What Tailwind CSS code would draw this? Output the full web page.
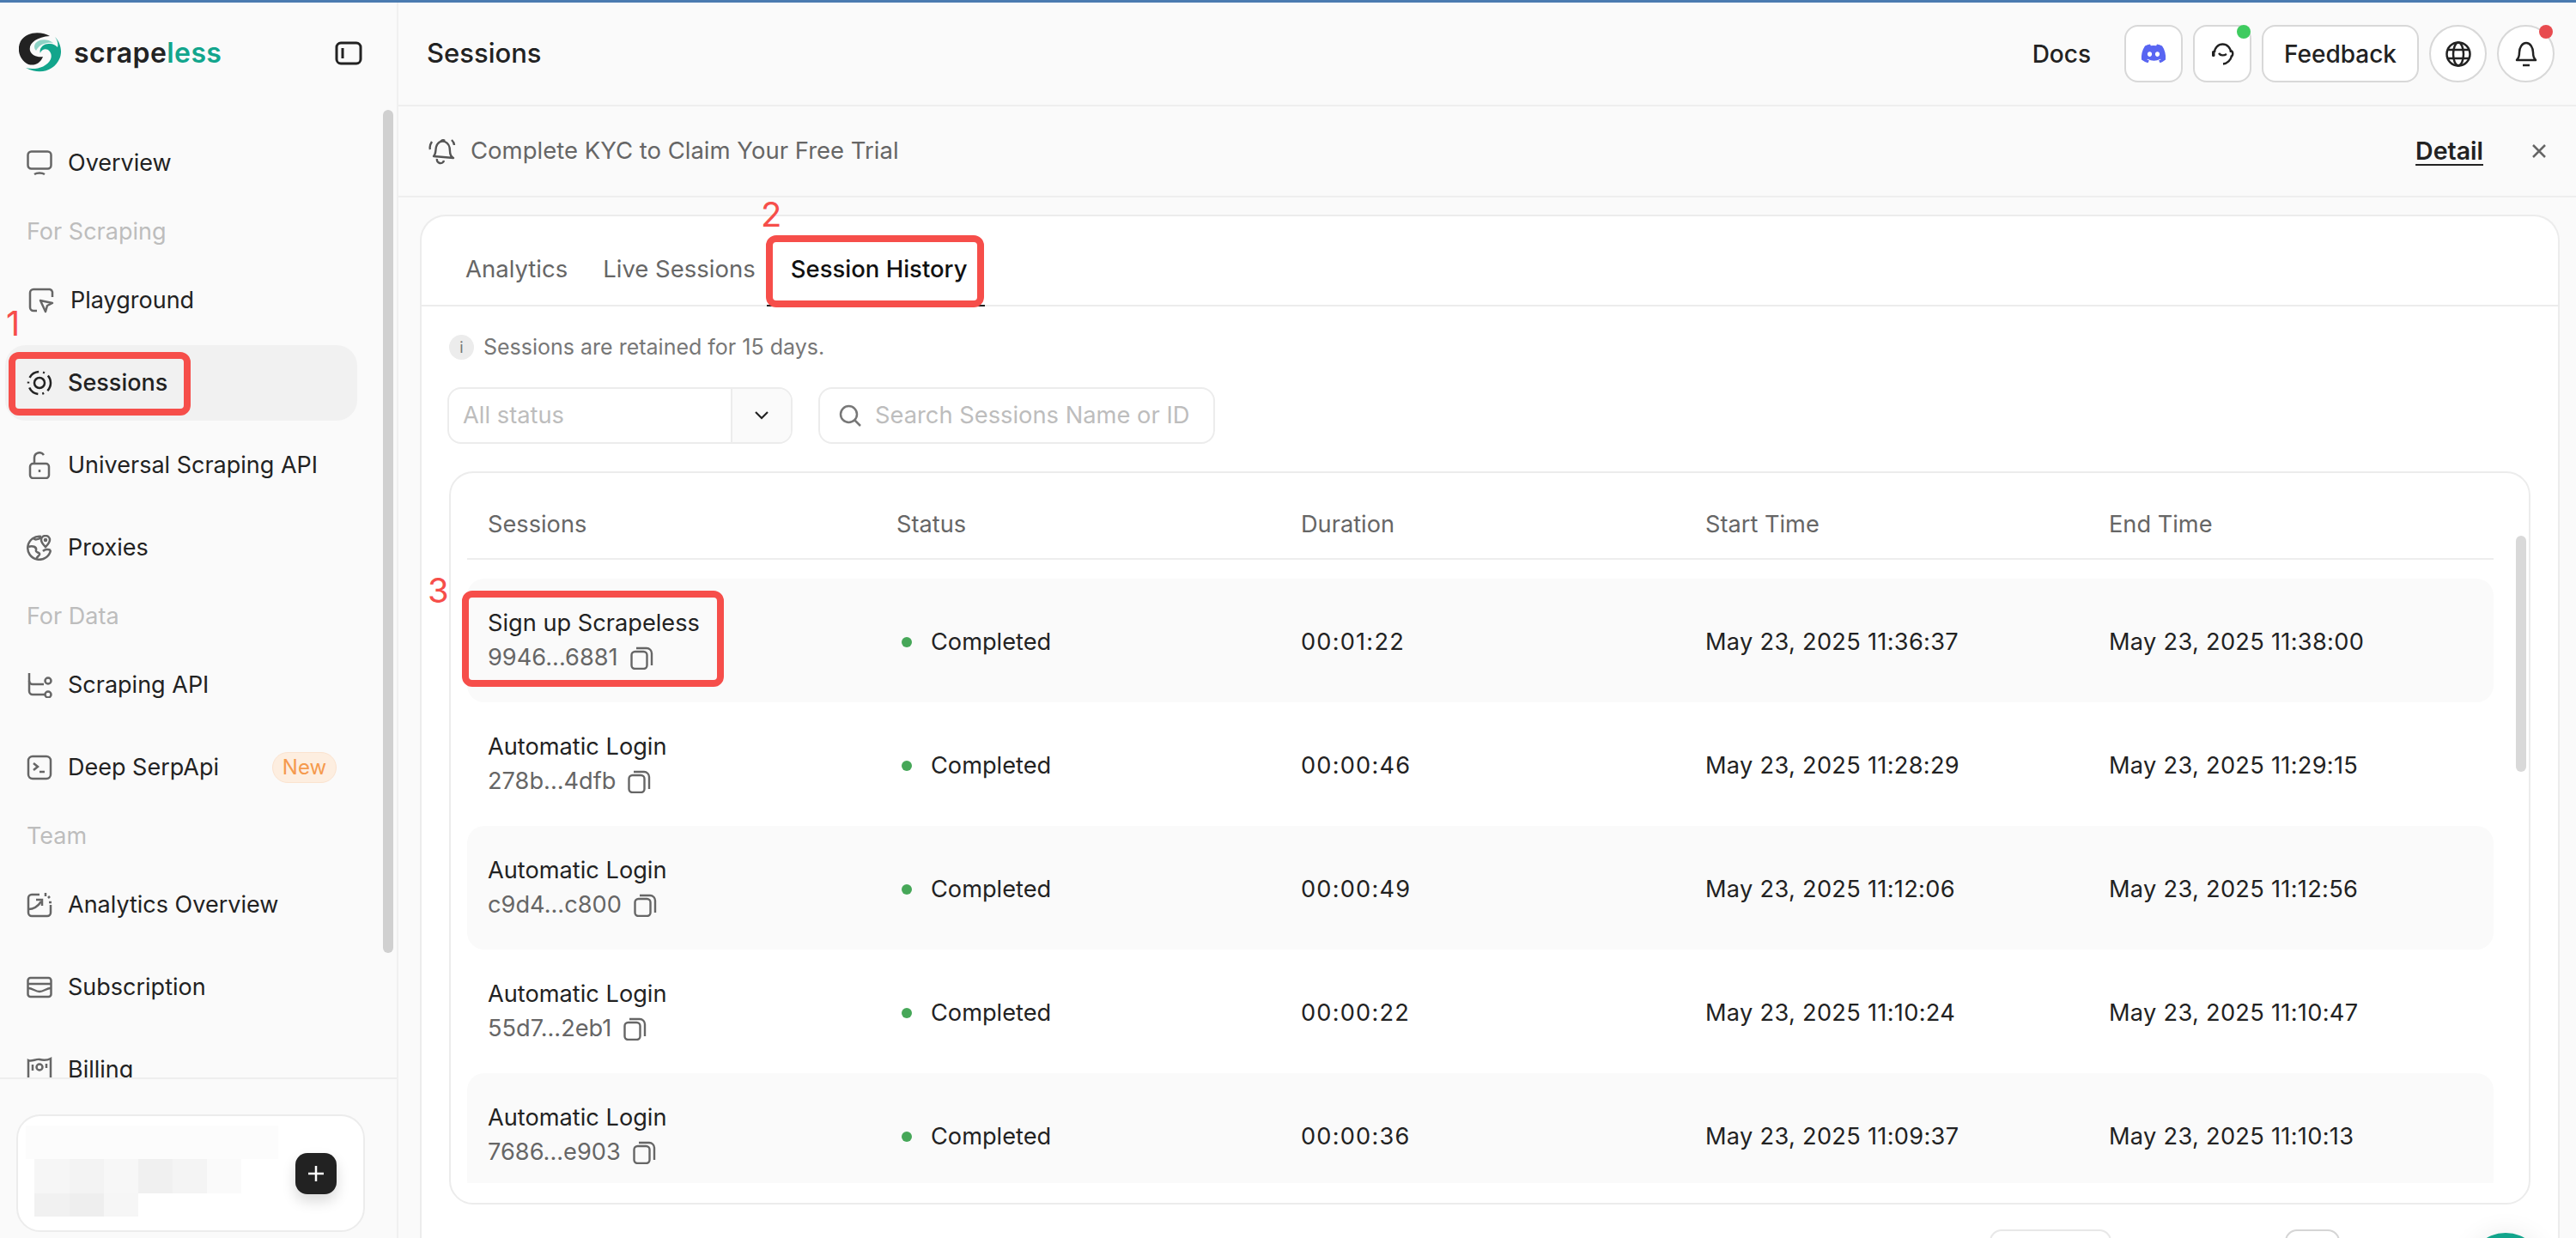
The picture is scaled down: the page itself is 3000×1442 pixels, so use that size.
<!DOCTYPE html>
<html lang="en">
<head>
<meta charset="utf-8">
<title>Sessions</title>
<script src="https://cdn.jsdelivr.net/npm/@tailwindcss/browser@4"></script>
</head>
<body class="[font-family:Inter,sans-serif] text-[#222222] bg-[#fafafa]">
<div class="relative w-[3000px] h-[1442px] overflow-hidden flex flex-col">
  <div class="h-[3px] bg-[#4a7bb0] shrink-0"></div>
  <div class="flex flex-1 min-h-0">
    <!-- Sidebar -->
    <aside class="relative w-[464px] shrink-0 border-r-2 border-[#f0f0f0] flex flex-col">
      <div class="h-[119px] shrink-0 flex items-start pt-[34px] pl-[22px]">
        <svg class="w-[50px] h-[49px] shrink-0" viewBox="0 0 50 49">
          <path d="M36 5C28 0 10-2 2 11C-3 21 1 33 11 38C18 40 25 37 28 29C22 30 15 28 13 22C11 14 20 6 36 5Z" fill="#222222"/>
          <path d="M18 17C19 10 30 6 40 13C33 12 24 14 20 22C18 20 18 18 18 17Z" fill="#8ed3c6"/>
          <path d="M42 6C49 13 51 24 47 32C42 43 27 52 8 42C18 45 32 42 37 32C40 24 33 18 28 21C26 22 25 24 25 25C23 20 28 13 36 14C40 14 43 16 45 18C46 14 45 10 42 6Z" fill="#12a58c"/>
        </svg>
        <div class="ml-[14px] mt-[5px] font-semibold text-[32px] leading-[40px] tracking-[0.4px]">scrape<span class="text-[#12a58c]">less</span></div>
        <svg class="absolute left-[390px] top-[45px] w-[32px] h-[28px]" viewBox="0 0 32 28" fill="none" stroke="#222222" stroke-width="3"><rect x="2" y="2" width="28" height="24" rx="5"/><path d="M9 8v12"/></svg>
      </div>
      <nav class="flex-1 min-h-0 overflow-hidden pt-[24px] pl-[6px] pr-[46px] flex flex-col gap-[8px] text-[27px]">
        <a class="h-[88px] shrink-0 flex items-center gap-[18px] pl-[25px]">
          <svg class="w-[30px] h-[30px] shrink-0" viewBox="0 0 30 30" fill="none" stroke="#666666" stroke-width="2.5"><rect x="1.500" y="1.500" width="27" height="20" rx="4"/><path d="M9 28c3-2 9-2 12 0"/></svg>
          Overview</a>
        <div class="h-[56px] shrink-0 flex items-center pl-[25px] text-[#bdbdbd]">For Scraping</div>
        <a class="h-[88px] shrink-0 flex items-center gap-[19px] pl-[27px]">
          <svg class="w-[30px] h-[30px] shrink-0" viewBox="0 0 30 30" fill="none" stroke="#666666" stroke-width="2.5"><path d="M10 27H6a4 4 0 0 1-4-4V6a4 4 0 0 1 4-4h19a4 4 0 0 1 3 3v6"/><path d="M14 15l14 3-6 3-2 7Z" stroke-linejoin="round"/></svg>
          Playground</a>
        <a class="h-[88px] shrink-0 flex items-center gap-[18px] pl-[25px] bg-[#f1f1f1] rounded-[24px] font-medium">
          <svg class="w-[30px] h-[30px] shrink-0" viewBox="0 0 30 30" fill="none" stroke="#222222" stroke-width="2.5"><circle cx="15" cy="15" r="6"/><circle cx="15" cy="15" r="13" stroke-dasharray="13 5 2 5" stroke-dashoffset="3"/></svg>
          Sessions</a>
        <a class="h-[88px] shrink-0 flex items-center gap-[18px] pl-[25px]">
          <svg class="w-[30px] h-[32px] shrink-0" viewBox="0 0 30 32" fill="none" stroke="#666666" stroke-width="2.5"><rect x="4" y="14" width="22" height="17" rx="3.500"/><path d="M9 14V7a6 6 0 0 1 11-3"/><path d="M15 21v3"/></svg>
          Universal Scraping API</a>
        <a class="h-[88px] shrink-0 flex items-center gap-[18px] pl-[25px]">
          <svg class="w-[30px] h-[30px] shrink-0" viewBox="0 0 30 30" fill="none" stroke="#666666" stroke-width="2.5"><path d="M28 18A13.500 13.500 0 1 1 17 2"/><path d="M2 14c5-2 10 0 9 4-1 3 5 2 4 5-1 2-4 3-4 6"/><path d="M17 3c-4 3-8 3-9 1"/><path d="M22 14c-3-3-5-5-5-8a5 5 0 0 1 10 0c0 3-2 5-5 8Z"/><path d="M28 18c-3-2-7-1-9 1"/><circle cx="22" cy="6" r="1" fill="#666666"/></svg>
          Proxies</a>
        <div class="h-[56px] shrink-0 flex items-center pl-[25px] text-[#bdbdbd]">For Data</div>
        <a class="h-[88px] shrink-0 flex items-center gap-[18px] pl-[25px]">
          <svg class="w-[30px] h-[30px] shrink-0" viewBox="0 0 30 30" fill="none" stroke="#666666" stroke-width="2.5"><path d="M3 1v21a4 4 0 0 0 4 4h14"/><path d="M3 10a4 4 0 0 0 4 4h13"/><circle cx="25" cy="10" r="3.500"/><circle cx="25" cy="26" r="3.500"/></svg>
          Scraping API</a>
        <a class="relative h-[88px] shrink-0 flex items-center gap-[18px] pl-[25px]">
          <svg class="w-[30px] h-[30px] shrink-0" viewBox="0 0 30 30" fill="none" stroke="#666666" stroke-width="2.5"><rect x="2" y="2" width="26" height="26" rx="5"/><path d="M8 10l5 4-5 4M15 20h6"/></svg>
          Deep SerpApi
          <span class="absolute left-[311px] top-[26px] w-[75px] h-[36px] rounded-full bg-[#fdeee0] border border-[#fbe3cf] text-[#f59a4d] text-[24px] flex items-center justify-center">New</span></a>
        <div class="h-[56px] shrink-0 flex items-center pl-[25px] text-[#bdbdbd]">Team</div>
        <a class="h-[88px] shrink-0 flex items-center gap-[18px] pl-[25px]">
          <svg class="w-[30px] h-[30px] shrink-0" viewBox="0 0 30 30" fill="none" stroke="#666666" stroke-width="2.5"><path d="M15 3H6a4 4 0 0 0-4 4v17a4 4 0 0 0 4 4h18a4 4 0 0 0 4-4v-9"/><path d="M2 20c6 0 11-3 15-9"/><path d="M11 9h7v7"/><path d="M22 1v4M27 5l-2 2M29 12h-3"/></svg>
          Analytics Overview</a>
        <a class="h-[88px] shrink-0 flex items-center gap-[18px] pl-[25px]">
          <svg class="w-[30px] h-[26px] shrink-0" viewBox="0 0 30 26" fill="none" stroke="#666666" stroke-width="2.5"><rect x="1.500" y="2" width="27" height="22" rx="3"/><path d="M2 9h26M2 14c5 0 8 4 13 4s8-4 13-4"/></svg>
          Subscription</a>
        <a class="h-[88px] shrink-0 flex items-center gap-[18px] pl-[25px]">
          <svg class="w-[30px] h-[30px] shrink-0" viewBox="0 0 30 30" fill="none" stroke="#666666" stroke-width="2.5"><path d="M2 26V4c4 2 9-2 13-1s9 1 13-1v24"/><circle cx="15" cy="12" r="3.500"/><path d="M7 9v7M23 8v5"/></svg>
          Billing</a>
      </nav>
      <div class="h-[187px] shrink-0 border-t-2 border-[#eeeeee] pt-[41px] pl-[19px]">
        <div class="relative w-[406px] h-[137px] bg-white border-2 border-[#ececec] rounded-[28px]">
          <div class="absolute left-[9px] top-[11px] w-[294px] h-[106px] bg-white">
            <div class="h-[39px] bg-[#fcfcfc]"></div>
            <div class="flex pl-[10px] h-[40px]">
              <div class="w-[41px] bg-[#f6f6f6]"></div><div class="w-[40px] bg-[#f3f3f3]"></div><div class="w-[40px] bg-[#f7f7f7]"></div><div class="w-[40px] bg-[#f0f0f0]"></div><div class="w-[40px] bg-[#f4f4f4]"></div><div class="w-[40px] bg-[#fafafa]"></div>
            </div>
            <div class="flex pl-[10px] h-[27px]">
              <div class="w-[41px] bg-[#f1f1f1]"></div><div class="w-[40px] bg-[#eeeeee]"></div><div class="w-[40px] bg-[#f6f6f6]"></div>
            </div>
          </div>
          <button class="absolute left-[323px] top-[43px] w-[48px] h-[48px] rounded-[14px] bg-[#222222] shadow-[0_8px_16px_rgba(0,0,0,0.15)] flex items-center justify-center">
            <svg class="w-[20px] h-[20px]" viewBox="0 0 20 20" stroke="#ffffff" stroke-width="2.5"><path d="M10 1v18M1 10h18"/></svg>
          </button>
        </div>
      </div>
      <div class="absolute left-[446px] top-[125px] w-[12px] h-[982px] rounded-full bg-[#d0d0d0]"></div>
    </aside>
    <!-- Main -->
    <main class="flex-1 min-w-0 flex flex-col">
      <header class="h-[121px] shrink-0 border-b-2 border-[#eeeeee] flex items-center pl-[33px] pr-[25px]">
        <h1 class="text-[31px] font-medium flex-1">Sessions</h1>
        <a class="text-[28px] font-medium mr-[39px]">Docs</a>
        <div class="flex gap-[12px] items-center">
          <button class="relative w-[68px] h-[67px] rounded-[16px] bg-white border-2 border-[#d8d8d8] flex items-center justify-center">
            <svg class="w-[30px] h-[24px]" viewBox="0 0 30 24"><path fill="#5865f2" d="M25 2.500A24 24 0 0 0 19 .5l-.8 1.700a22 22 0 0 0-6.400 0L11 .5a24 24 0 0 0-6 2C1.500 8 .5 13.200 1 18.400a24 24 0 0 0 7.400 3.800l1.500-2.600-2.500-1.300.6-.5a17 17 0 0 0 15 0l.6.5-2.500 1.300 1.500 2.600A24 24 0 0 0 29 18.400c.6-6-.9-11.200-4-15.900ZM10.500 15c-1.500 0-2.600-1.300-2.600-2.900s1.100-2.900 2.600-2.900 2.700 1.300 2.600 2.900c0 1.600-1.100 2.900-2.600 2.900Zm9 0c-1.500 0-2.600-1.300-2.600-2.900s1.100-2.900 2.600-2.900 2.700 1.300 2.600 2.900c0 1.600-1.100 2.900-2.600 2.900Z"/></svg>
          </button>
          <button class="relative w-[68px] h-[67px] rounded-[16px] bg-white border-2 border-[#d8d8d8] flex items-center justify-center">
            <svg class="w-[27px] h-[27px]" viewBox="0 0 27 27" fill="none" stroke="#222222" stroke-width="2.4"><path d="M4 12a9.500 9.500 0 0 1 19 0"/><rect x="1" y="10" width="3.500" height="7" rx="1.500" fill="#222222" stroke="none"/><path d="M23 10c3 1 3 6 0 7"/><path d="M24 16c-1 5-5 9-10 9.500"/><path d="M9 13c2 3 6 3 9 1"/></svg>
            <span class="absolute -top-[2px] -right-[1px] w-[16px] h-[16px] rounded-full bg-[#3ecb5f]"></span>
          </button>
          <button class="w-[183px] h-[67px] rounded-[16px] bg-white border-2 border-[#d8d8d8] text-[28px] font-medium">Feedback</button>
          <button class="w-[67px] h-[67px] rounded-full bg-white border-2 border-[#d8d8d8] flex items-center justify-center">
            <svg class="w-[30px] h-[30px]" viewBox="0 0 30 30" fill="none" stroke="#222222" stroke-width="2.5"><circle cx="15" cy="15" r="13.500"/><ellipse cx="15" cy="15" rx="6" ry="13.500"/><path d="M2 10h26M2 20h26"/></svg>
          </button>
          <button class="relative w-[67px] h-[67px] rounded-full bg-white border-2 border-[#d8d8d8] flex items-center justify-center">
            <svg class="w-[28px] h-[30px]" viewBox="0 0 28 30" fill="none" stroke="#222222" stroke-width="2.5"><path d="M3 22c2-2 3-4 3-9s3-11 8-11 8 6 8 11 1 7 3 9Z" stroke-linejoin="round"/><path d="M10 28h8"/></svg>
            <span class="absolute -top-[2px] right-[0px] w-[16px] h-[16px] rounded-full bg-[#e84b4f]"></span>
          </button>
        </div>
      </header>
      <div class="h-[106px] shrink-0 border-b-2 border-[#eeeeee] flex items-center pl-[34px] pr-[34px]">
        <svg class="w-[34px] h-[34px] shrink-0" viewBox="0 0 34 34" fill="none" stroke="#555555" stroke-width="2.4"><path d="M7 23c3-3 2-7 3-11s5-8 10-6 6 7 6 11 2 7 4 8Z" stroke-linejoin="round"/><path d="M15 7a3 3 0 0 1 5-2M11 26a4 4 0 0 0 8 2M5 6C3 9 2 12 3 15M28 4c2 2 3 4 3 6"/></svg>
        <div class="ml-[16px] flex-1 text-[27.5px] text-[#666666]">Complete KYC to Claim Your Free Trial</div>
        <a class="text-[28.5px] font-semibold underline underline-offset-[5px]">Detail</a>
        <svg class="ml-[56px] w-[18px] h-[18px]" viewBox="0 0 18 18" stroke="#666666" stroke-width="2.5"><path d="M2 2l14 14M16 2L2 16"/></svg>
      </div>
      <section class="ml-[25px] mr-[19px] mt-[20px] flex-1 min-h-0 bg-white border-2 border-b-0 border-[#ececec] rounded-t-[30px] flex flex-col">
        <div class="h-[105px] shrink-0 border-b-2 border-[#ececec] flex pl-[51px] pt-[41px] gap-[41px] text-[27.5px] text-[#666666]">
          <span class="leading-[40px]">Analytics</span>
          <span class="leading-[40px]">Live Sessions</span>
          <span class="relative leading-[40px] text-[#111111] font-medium">Session History<span class="absolute left-[-28px] right-[-21px] top-[62px] h-[2px] bg-[#222222]"></span></span>
        </div>
        <div class="pl-[32px] pt-[34px] flex items-center gap-[11px] h-[61px] text-[25px] text-[#777777]">
          <span class="w-[29px] h-[29px] rounded-full bg-[#ececec] flex items-center justify-center text-[18px]">i</span>
          Sessions are retained for 15 days.
        </div>
        <div class="ml-[30px] mt-[33px] flex gap-[30px] text-[27.3px] text-[#bdbdbd]">
          <div class="w-[402px] h-[66px] bg-white border-2 border-[#ececec] rounded-[16px] flex overflow-hidden">
            <div class="flex-1 pl-[16px] flex items-center">All status</div>
            <div class="w-[70px] border-l-2 border-[#ececec] bg-[#fafafa] flex items-center justify-center">
              <svg class="w-[16px] h-[10px]" viewBox="0 0 16 10" fill="none" stroke="#222222" stroke-width="2.2"><path d="M1 1l7 7 7-7"/></svg>
            </div>
          </div>
          <div class="w-[462px] h-[66px] bg-white border-2 border-[#ececec] rounded-[16px] flex items-center pl-[22px] gap-[16px]">
            <svg class="w-[26px] h-[26px]" viewBox="0 0 26 26" fill="none" stroke="#777777" stroke-width="2.5"><circle cx="11.500" cy="11.500" r="9.500"/><path d="M18 18l7 7"/></svg>
            Search Sessions Name or ID
          </div>
        </div>
        <div class="relative ml-[32px] mt-[32px] w-[2424px] h-[854px] shrink-0 bg-white border-2 border-[#ececec] rounded-[28px] pl-[19px] pr-[41px]">
          <div class="h-[101px] border-b-2 border-[#eeeeee] pl-[24px] pt-[40px] grid grid-cols-[476px_471px_471px_470px_1fr] text-[27.2px] leading-[40px] text-[#666666]">
            <span>Sessions</span><span>Status</span><span>Duration</span><span>Start Time</span><span>End Time</span>
          </div>
          <div class="mt-[22px] h-[704px] overflow-hidden text-[27.2px]">
            <div class="h-[144px] pt-[4px] bg-[#fafafa] rounded-[20px] pl-[24px] grid grid-cols-[476px_471px_471px_470px_1fr] items-center">
              <div class="-mt-[4px] flex flex-col gap-[6px]"><span class="leading-[34px] h-[34px]">Sign up Scrapeless</span><span class="flex items-center gap-[14px] leading-[34px] h-[34px] text-[#666666]">9946...6881<svg class="w-[27px] h-[27px]" viewBox="0 0 27 27" fill="none" stroke="#666666" stroke-width="2.4"><rect x="1.500" y="6" width="18" height="20" rx="4"/><path d="M7 2h12a6 6 0 0 1 6 6v14"/></svg></span></div>
              <div class="flex items-center gap-[22px] pl-[6px]"><span class="w-[12px] h-[12px] rounded-full bg-[#46a758]"></span>Completed</div>
              <div class="tracking-[1.2px]">00:01:22</div><div class="tracking-[0.3px]">May 23, 2025 11:36:37</div><div class="tracking-[0.3px]">May 23, 2025 11:38:00</div>
            </div>
            <div class="h-[144px] pt-[4px] pl-[24px] grid grid-cols-[476px_471px_471px_470px_1fr] items-center">
              <div class="-mt-[4px] flex flex-col gap-[6px]"><span class="leading-[34px] h-[34px]">Automatic Login</span><span class="flex items-center gap-[14px] leading-[34px] h-[34px] text-[#666666]">278b...4dfb<svg class="w-[27px] h-[27px]" viewBox="0 0 27 27" fill="none" stroke="#666666" stroke-width="2.4"><rect x="1.500" y="6" width="18" height="20" rx="4"/><path d="M7 2h12a6 6 0 0 1 6 6v14"/></svg></span></div>
              <div class="flex items-center gap-[22px] pl-[6px]"><span class="w-[12px] h-[12px] rounded-full bg-[#46a758]"></span>Completed</div>
              <div class="tracking-[1.2px]">00:00:46</div><div class="tracking-[0.3px]">May 23, 2025 11:28:29</div><div class="tracking-[0.3px]">May 23, 2025 11:29:15</div>
            </div>
            <div class="h-[144px] pt-[4px] bg-[#fafafa] rounded-[20px] pl-[24px] grid grid-cols-[476px_471px_471px_470px_1fr] items-center">
              <div class="-mt-[4px] flex flex-col gap-[6px]"><span class="leading-[34px] h-[34px]">Automatic Login</span><span class="flex items-center gap-[14px] leading-[34px] h-[34px] text-[#666666]">c9d4...c800<svg class="w-[27px] h-[27px]" viewBox="0 0 27 27" fill="none" stroke="#666666" stroke-width="2.4"><rect x="1.500" y="6" width="18" height="20" rx="4"/><path d="M7 2h12a6 6 0 0 1 6 6v14"/></svg></span></div>
              <div class="flex items-center gap-[22px] pl-[6px]"><span class="w-[12px] h-[12px] rounded-full bg-[#46a758]"></span>Completed</div>
              <div class="tracking-[1.2px]">00:00:49</div><div class="tracking-[0.3px]">May 23, 2025 11:12:06</div><div class="tracking-[0.3px]">May 23, 2025 11:12:56</div>
            </div>
            <div class="h-[144px] pt-[4px] pl-[24px] grid grid-cols-[476px_471px_471px_470px_1fr] items-center">
              <div class="-mt-[4px] flex flex-col gap-[6px]"><span class="leading-[34px] h-[34px]">Automatic Login</span><span class="flex items-center gap-[14px] leading-[34px] h-[34px] text-[#666666]">55d7...2eb1<svg class="w-[27px] h-[27px]" viewBox="0 0 27 27" fill="none" stroke="#666666" stroke-width="2.4"><rect x="1.500" y="6" width="18" height="20" rx="4"/><path d="M7 2h12a6 6 0 0 1 6 6v14"/></svg></span></div>
              <div class="flex items-center gap-[22px] pl-[6px]"><span class="w-[12px] h-[12px] rounded-full bg-[#46a758]"></span>Completed</div>
              <div class="tracking-[1.2px]">00:00:22</div><div class="tracking-[0.3px]">May 23, 2025 11:10:24</div><div class="tracking-[0.3px]">May 23, 2025 11:10:47</div>
            </div>
            <div class="h-[144px] pt-[4px] bg-[#fafafa] rounded-[20px] pl-[24px] grid grid-cols-[476px_471px_471px_470px_1fr] items-center">
              <div class="-mt-[4px] flex flex-col gap-[6px]"><span class="leading-[34px] h-[34px]">Automatic Login</span><span class="flex items-center gap-[14px] leading-[34px] h-[34px] text-[#666666]">7686...e903<svg class="w-[27px] h-[27px]" viewBox="0 0 27 27" fill="none" stroke="#666666" stroke-width="2.4"><rect x="1.500" y="6" width="18" height="20" rx="4"/><path d="M7 2h12a6 6 0 0 1 6 6v14"/></svg></span></div>
              <div class="flex items-center gap-[22px] pl-[6px]"><span class="w-[12px] h-[12px] rounded-full bg-[#46a758]"></span>Completed</div>
              <div class="tracking-[1.2px]">00:00:36</div><div class="tracking-[0.3px]">May 23, 2025 11:09:37</div><div class="tracking-[0.3px]">May 23, 2025 11:10:13</div>
            </div>
          </div>
          <div class="absolute left-[2405px] top-[73px] w-[12px] h-[275px] rounded-full bg-[#d9d9d9]"></div>
        </div>
        <div class="relative mt-[29px] ml-[1826px] flex gap-[202px]">
          <div class="w-[142px] h-[60px] rounded-[14px] border-2 border-[#e8e8e8] bg-white"></div>
          <div class="w-[64px] h-[60px] rounded-[14px] border-2 border-[#d5d5d5] bg-white"></div>
        </div>
      </section>
    </main>
  </div>
  <!-- chat bubble -->
  <div class="absolute left-[2874px] top-[1436px] w-[88px] h-[88px] rounded-full bg-[#12a58c] shadow-[0_0_30px_rgba(0,0,0,0.08)]"></div>
  <!-- Annotations -->
  <div class="absolute left-[10px] top-[410px] w-[212px] h-[74px] border-[8px] border-[#f64e4a] rounded-[12px]"></div>
  <div class="absolute left-[892px] top-[274px] w-[254px] h-[84px] border-[8px] border-[#f64e4a] rounded-[12px]"></div>
  <div class="absolute left-[538px] top-[688px] w-[305px] h-[112px] border-[8px] border-[#f64e4a] rounded-[12px]"></div>
  <span class="absolute left-[7px] top-[355px] text-[40px] leading-[44px] text-[#f64e4a]">1</span>
  <span class="absolute left-[886px] top-[228px] text-[40px] leading-[44px] text-[#f64e4a]">2</span>
  <span class="absolute left-[498px] top-[666px] text-[40px] leading-[44px] text-[#f64e4a]">3</span>
</div>
</body>
</html>
